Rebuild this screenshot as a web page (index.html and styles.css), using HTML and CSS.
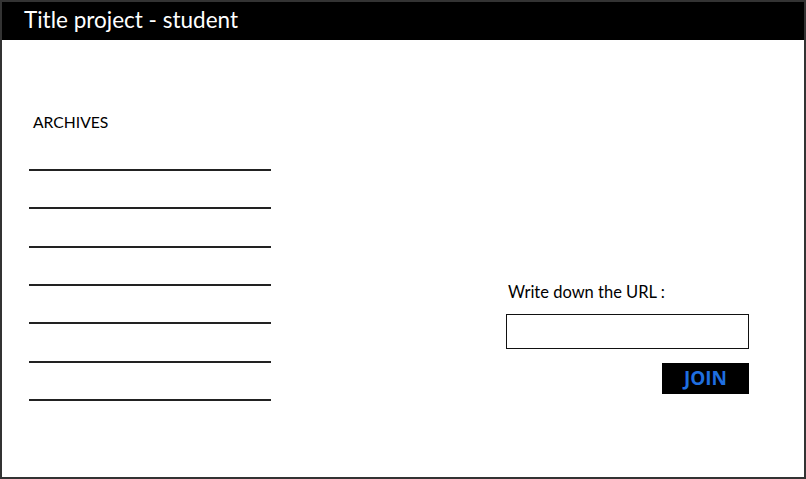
FILE: index.html
```html
<!DOCTYPE html>
<html>
<head>
<meta charset="utf-8">
<link rel="stylesheet" href="styles.css">
</head>
<body>
<div class="frame">
  <header class="topbar">Title project - student</header>
  <main class="content">
    <section class="archives">
      <div class="archives-title">ARCHIVES</div>
      <div class="archive-lines">
        <div class="line"></div>
        <div class="line"></div>
        <div class="line"></div>
        <div class="line"></div>
        <div class="line"></div>
        <div class="line"></div>
        <div class="line"></div>
      </div>
    </section>
    <section class="join">
      <label class="join-label">Write down the URL :</label>
      <div class="url-input"></div>
      <div class="join-row"><button class="join-btn">JOIN</button></div>
    </section>
  </main>
</div>
</body>
</html>
```
FILE: styles.css
```css
html, body {
  margin: 0;
  padding: 0;
  background: #fff;
}
.frame {
  width: 806px;
  height: 479px;
  box-sizing: border-box;
  border: 2px solid #333;
  display: flex;
  flex-direction: column;
  font-family: "Lato", "Open Sans", sans-serif;
}
.topbar {
  height: 38px;
  background: #000;
  color: #fff;
  font-size: 22.5px;
  line-height: 36px;
  padding-left: 22px;
  box-sizing: border-box;
}
.content {
  flex: 1;
  display: flex;
  align-items: flex-start;
}
.archives {
  margin-left: 27px;
  width: 242px;
  padding-top: 72px;
}
.archives-title {
  font-size: 15.7px;
  line-height: 20px;
  color: #000;
  padding-left: 4px;
}
.archive-lines {
  margin-top: 37px;
  display: flex;
  flex-direction: column;
  gap: 36.33px;
}
.line {
  height: 2px;
  background: #222;
}
.join {
  margin-left: auto;
  margin-right: 55px;
  width: 243px;
  padding-top: 242px;
  display: flex;
  flex-direction: column;
}
.join-label {
  font-size: 16.5px;
  line-height: 20px;
  padding-left: 2px;
  color: #000;
}
.url-input {
  margin-top: 12px;
  height: 35px;
  box-sizing: border-box;
  border: 1px solid #111;
}
.join-row {
  display: flex;
  justify-content: flex-end;
  margin-top: 14px;
}
.join-btn {
  width: 87px;
  height: 31px;
  background: #000;
  border: none;
  color: #1f6fe0;
  font-family: "Open Sans", "Lato", sans-serif;
  font-weight: 700;
  font-size: 19px;
  padding: 0;
  line-height: 31px;
}
```
